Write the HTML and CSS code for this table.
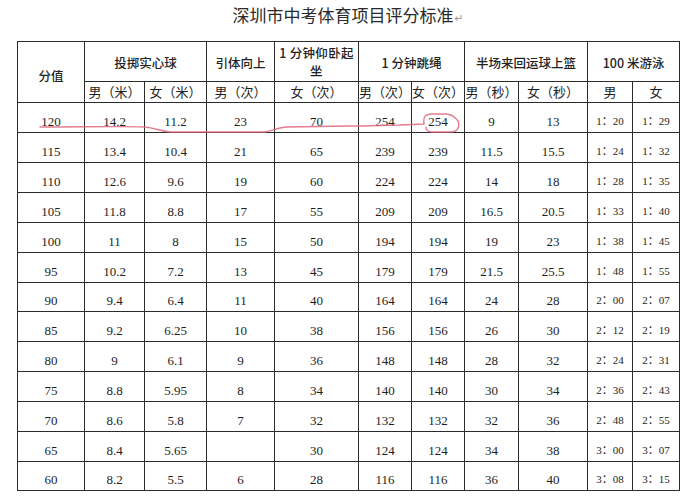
FILE: index.html
```html
<!DOCTYPE html>
<html lang="zh-CN">
<head>
<meta charset="utf-8">
<title>深圳市中考体育项目评分标准</title>
<link rel="stylesheet" href="styles.css">
</head>
<body>
<div class="page">
  <h1 class="title">深圳市中考体育项目评分标准<span class="pmark">↵</span></h1>
  <table class="score">
    <colgroup>
      <col class="c1"><col class="c2"><col class="c3"><col class="c4"><col class="c5"><col class="c6"><col class="c7"><col class="c8"><col class="c9"><col class="c10"><col class="c11">
    </colgroup>
    <thead>
      <tr class="h1">
        <th rowspan="2" class="fen">分值</th>
        <th colspan="2">投掷实心球</th>
        <th>引体向上</th>
        <th class="wrap">1 分钟仰卧起坐</th>
        <th colspan="2">1 分钟跳绳</th>
        <th colspan="2">半场来回运球上篮</th>
        <th colspan="2">100 米游泳</th>
      </tr>
      <tr class="h2">
        <th>男（米）</th><th>女（米）</th><th>男（次）</th><th>女（次）</th><th>男（次）</th><th>女（次）</th><th>男（秒）</th><th>女（秒）</th><th>男</th><th>女</th>
      </tr>
    </thead>
    <tbody>
      <tr><td>120</td><td>14.2</td><td>11.2</td><td>23</td><td>70</td><td>254</td><td>254</td><td>9</td><td>13</td><td class="t">1：20</td><td class="t">1：29</td></tr>
      <tr><td>115</td><td>13.4</td><td>10.4</td><td>21</td><td>65</td><td>239</td><td>239</td><td>11.5</td><td>15.5</td><td class="t">1：24</td><td class="t">1：32</td></tr>
      <tr><td>110</td><td>12.6</td><td>9.6</td><td>19</td><td>60</td><td>224</td><td>224</td><td>14</td><td>18</td><td class="t">1：28</td><td class="t">1：35</td></tr>
      <tr><td>105</td><td>11.8</td><td>8.8</td><td>17</td><td>55</td><td>209</td><td>209</td><td>16.5</td><td>20.5</td><td class="t">1：33</td><td class="t">1：40</td></tr>
      <tr><td>100</td><td>11</td><td>8</td><td>15</td><td>50</td><td>194</td><td>194</td><td>19</td><td>23</td><td class="t">1：38</td><td class="t">1：45</td></tr>
      <tr><td>95</td><td>10.2</td><td>7.2</td><td>13</td><td>45</td><td>179</td><td>179</td><td>21.5</td><td>25.5</td><td class="t">1：48</td><td class="t">1：55</td></tr>
      <tr class="short"><td>90</td><td>9.4</td><td>6.4</td><td>11</td><td>40</td><td>164</td><td>164</td><td>24</td><td>28</td><td class="t">2：00</td><td class="t">2：07</td></tr>
      <tr><td>85</td><td>9.2</td><td>6.25</td><td>10</td><td>38</td><td>156</td><td>156</td><td>26</td><td>30</td><td class="t">2：12</td><td class="t">2：19</td></tr>
      <tr><td>80</td><td>9</td><td>6.1</td><td>9</td><td>36</td><td>148</td><td>148</td><td>28</td><td>32</td><td class="t">2：24</td><td class="t">2：31</td></tr>
      <tr><td>75</td><td>8.8</td><td>5.95</td><td>8</td><td>34</td><td>140</td><td>140</td><td>30</td><td>34</td><td class="t">2：36</td><td class="t">2：43</td></tr>
      <tr><td>70</td><td>8.6</td><td>5.8</td><td>7</td><td>32</td><td>132</td><td>132</td><td>32</td><td>36</td><td class="t">2：48</td><td class="t">2：55</td></tr>
      <tr><td>65</td><td>8.4</td><td>5.65</td><td></td><td>30</td><td>124</td><td>124</td><td>34</td><td>38</td><td class="t">3：00</td><td class="t">3：07</td></tr>
      <tr class="short"><td>60</td><td>8.2</td><td>5.5</td><td>6</td><td>28</td><td>116</td><td>116</td><td>36</td><td>40</td><td class="t">3：08</td><td class="t">3：15</td></tr>
    </tbody>
  </table>
  <svg class="ink" viewBox="0 0 694 503" width="694" height="503" aria-hidden="true">
    <path d="M40,127 C80,127 128,126 145,127 C155,128 160,131 170,132 L265,132 C272,131 276,128 286,127 L350,126 C370,126 385,125 400,125 L424,124 C423,117 425,114 432,114 L446,114 C452,114 455,117 458,121 C460,126 458,132 451,132 L432,132 C428,132 426,130 426,127" />
  </svg>
</div>
</body>
</html>
```
FILE: styles.css
```css
html, body {
  margin: 0;
  padding: 0;
  background: #ffffff;
}

.page {
  position: relative;
  width: 694px;
  height: 503px;
  overflow: hidden;
}

.title {
  margin: 3px 0 0 0;
  height: 24px;
  line-height: 24px;
  font-family: "Noto Sans CJK SC", "Noto Sans", sans-serif;
  font-weight: 400;
  font-size: 17px;
  color: #2a2a2a;
  text-align: center;
  padding-left: 2px;
}

.pmark {
  font-family: "DejaVu Sans", sans-serif;
  font-size: 11px;
  color: #9a9a9a;
  margin-left: 1px;
}

.score {
  margin: 14px 0 0 17px;
  border-collapse: collapse;
  table-layout: fixed;
  width: 662px;
}

.c1 { width: 67px; }
.c2 { width: 60px; }
.c3 { width: 62px; }
.c4 { width: 68px; }
.c5 { width: 84px; }
.c6 { width: 53px; }
.c7 { width: 53px; }
.c8 { width: 54px; }
.c9 { width: 69px; }
.c10 { width: 45px; }
.c11 { width: 47px; }

.score th,
.score td {
  border: 1px solid #2b2b2b;
  padding: 0;
  text-align: center;
  color: #1e1e1e;
  overflow: hidden;
  white-space: nowrap;
}

.score th {
  font-family: "Noto Sans CJK SC", "Noto Sans", sans-serif;
}

.h1 {
  height: 40px;
}

.h1 th {
  font-size: 12.5px;
  font-weight: 500;
  line-height: 18px;
  vertical-align: middle;
  padding-top: 2px;
  color: #222222;
}

.h1 th.fen {
  padding-top: 7px;
}

.h1 th.wrap {
  white-space: normal;
  padding: 0 2px;
  line-height: 18px;
  letter-spacing: 0.3px;
}

.h2 {
  height: 21px;
}

.h2 th {
  font-size: 13px;
  font-weight: 400;
  line-height: 18px;
  vertical-align: middle;
}

.score tbody tr {
  height: 30px;
}

.score tbody tr.short {
  height: 29px;
}

.score td {
  font-family: "Liberation Serif", "Times New Roman", serif;
  font-size: 13px;
  line-height: 16px;
  vertical-align: bottom;
  padding-bottom: 2px;
}

.score td.t {
  font-size: 11px;
  font-family: "Liberation Serif", "Noto Sans CJK SC", serif;
  padding-bottom: 3px;
}

.ink {
  position: absolute;
  left: 0;
  top: 0;
  pointer-events: none;
}

.ink path {
  fill: none;
  stroke: #e0667c;
  stroke-width: 1.4;
  stroke-linecap: round;
  stroke-linejoin: round;
  opacity: 0.85;
}
```
